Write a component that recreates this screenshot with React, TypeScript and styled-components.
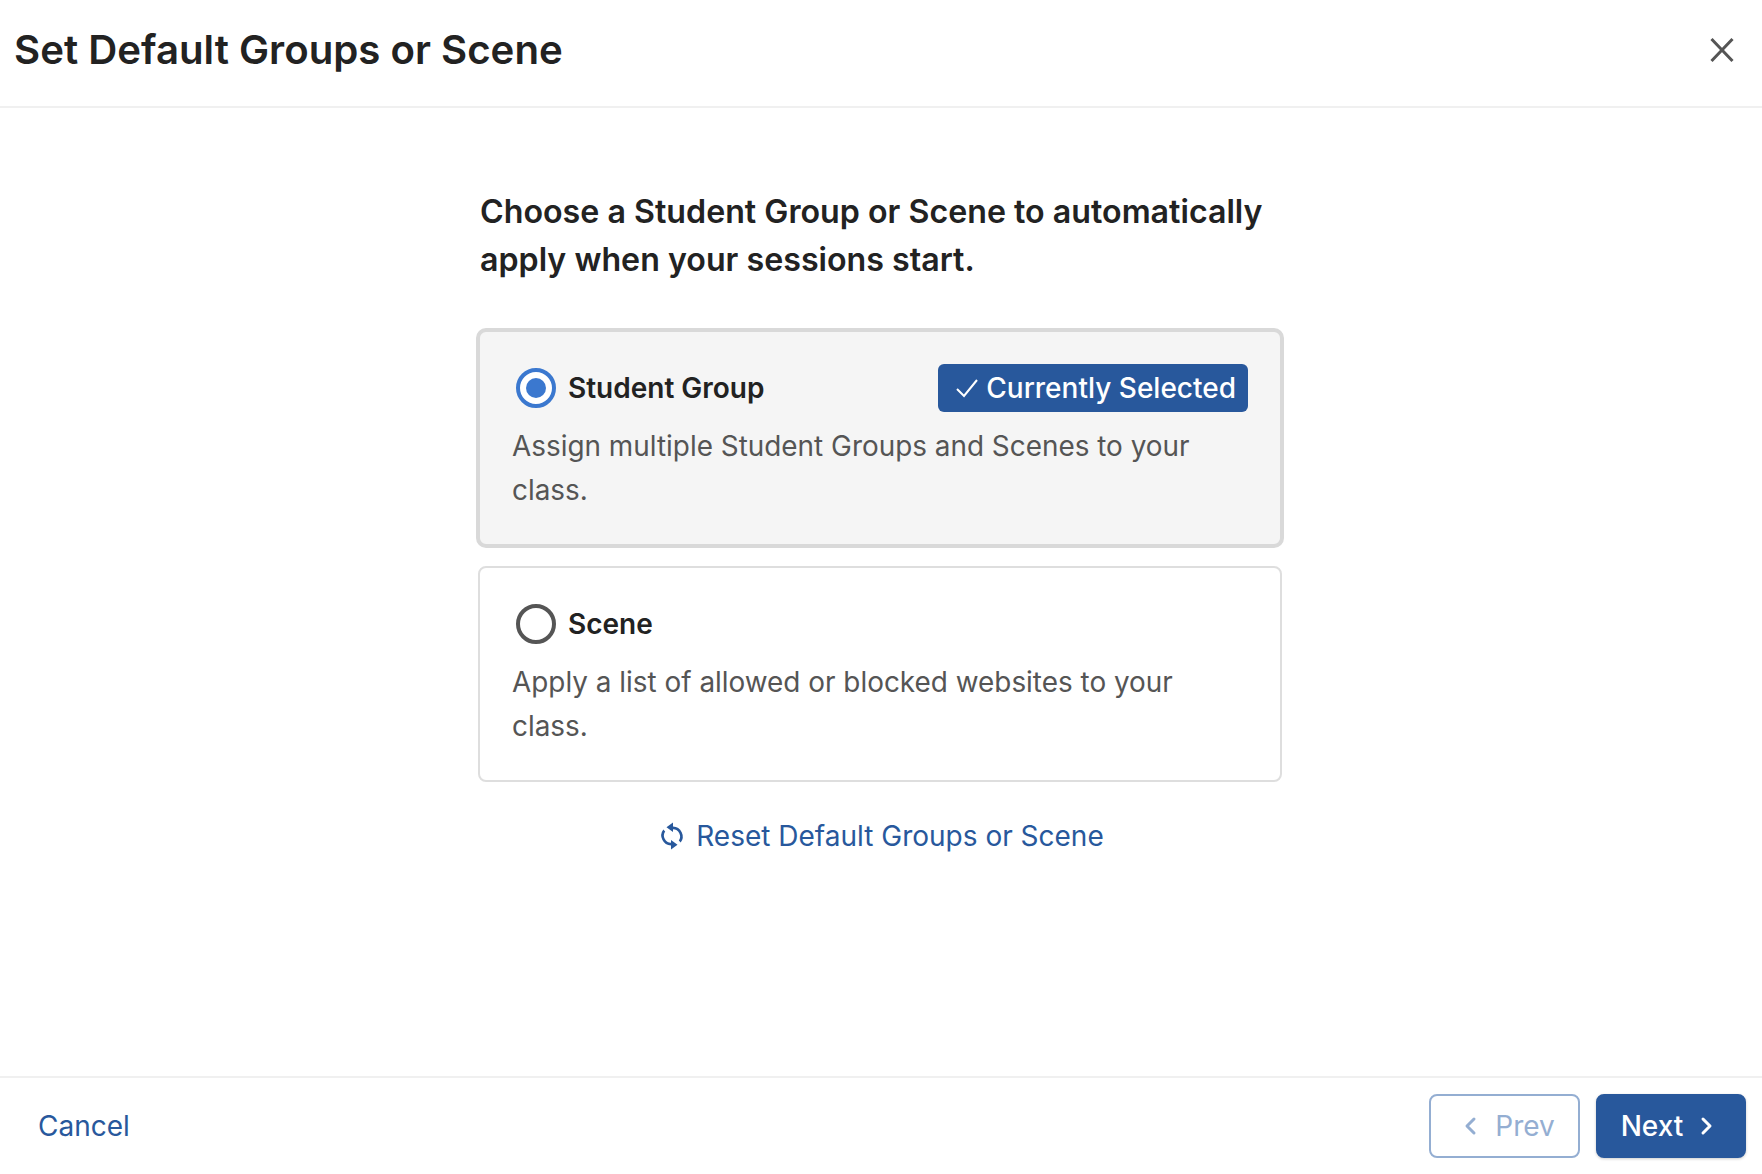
import React from "react";
import styled, { createGlobalStyle } from "styled-components";

const blue = "#28589c";

const GlobalStyle = createGlobalStyle`
  * {
    box-sizing: border-box;
  }

  body {
    margin: 0;
    background: #ffffff;
    font-family: Inter, "Liberation Sans", sans-serif;
  }
`;

const Modal = styled.div`
  display: flex;
  flex-direction: column;
  height: 100vh;
`;

const Header = styled.header`
  display: flex;
  align-items: center;
  justify-content: space-between;
  height: 108px;
  padding: 0 25px 7px 14px;
  border-bottom: 2px solid #f0f0f0;
`;

const Title = styled.h1`
  margin: 0;
  font-size: 40.2px;
  font-weight: 600;
  color: #222222;
`;

const IconButton = styled.button`
  display: flex;
  padding: 0;
  border: 0;
  background: none;
  color: #555555;
`;

const Body = styled.main`
  flex: 1;
  display: flex;
  flex-direction: column;
  width: 804px;
  margin-left: 478px;
  padding-top: 80px;
`;

const Heading = styled.h2`
  margin: 0 0 46px 2px;
  font-size: 32.2px;
  font-weight: 600;
  line-height: 48px;
  color: #222222;
`;

const OptionCard = styled.section<{ $selected?: boolean }>`
  margin-bottom: 20px;
  padding: 31px 32px 32px;
  border: 2px solid ${(p) => (p.$selected ? "#d9d9d9" : "#dedede")};
  border-radius: 8px;
  background: ${(p) => (p.$selected ? "#f5f5f5" : "#ffffff")};
  box-shadow: ${(p) => (p.$selected ? "0 0 0 2px #d9d9d9" : "none")};
`;

const OptionTop = styled.div`
  display: flex;
  align-items: center;
  min-height: 49px;
  padding-left: 4px;
`;

const Radio = styled.span<{ $checked?: boolean }>`
  display: flex;
  align-items: center;
  justify-content: center;
  width: 40px;
  height: 40px;
  margin-right: 12px;
  border: 4px solid ${(p) => (p.$checked ? "#3b78cf" : "#555555")};
  border-radius: 50%;
  background: #ffffff;

  &::after {
    content: "";
    display: ${(p) => (p.$checked ? "block" : "none")};
    width: 20px;
    height: 20px;
    border-radius: 50%;
    background: #3b78cf;
  }
`;

const OptionName = styled.span`
  font-size: 28px;
  font-weight: 600;
  color: #222222;
`;

const Badge = styled.span`
  display: flex;
  align-items: center;
  gap: 7px;
  height: 48px;
  margin-left: auto;
  padding: 0 12px 0 17px;
  border-radius: 6px;
  background: ${blue};
  font-size: 28px;
  font-weight: 500;
  color: #ffffff;
`;

const OptionText = styled.p`
  margin: 12px 0 0;
  font-size: 27.9px;
  line-height: 44px;
  color: #555555;
`;

const ResetLink = styled.button`
  display: flex;
  align-items: center;
  justify-content: center;
  gap: 10px;
  height: 44px;
  margin-top: 12px;
  padding: 0 0 0 2px;
  border: 0;
  background: none;
  font: inherit;
  font-size: 28px;
  color: ${blue};
`;

const Footer = styled.footer`
  display: flex;
  align-items: center;
  gap: 16px;
  padding: 16px 16px 16px 38px;
  border-top: 2px solid #f0f0f0;
`;

const CancelLink = styled.button`
  margin-right: auto;
  padding: 0;
  border: 0;
  background: none;
  font: inherit;
  font-size: 28px;
  color: ${blue};
`;

const StepButton = styled.button<{ $primary?: boolean }>`
  display: flex;
  align-items: center;
  justify-content: center;
  gap: ${(p) => (p.$primary ? "12px" : "13px")};
  width: ${(p) => (p.$primary ? "150px" : "151px")};
  height: 64px;
  padding: ${(p) => (p.$primary ? "0 2px 0 0" : "0 0 0 4px")};
  border: 2px solid ${(p) => (p.$primary ? blue : "#94aed2")};
  border-radius: 8px;
  background: ${(p) => (p.$primary ? blue : "#ffffff")};
  box-shadow: ${(p) => (p.$primary ? "0 1px 3px rgba(0, 0, 0, 0.2)" : "none")};
  font: inherit;
  font-size: 28px;
  font-weight: ${(p) => (p.$primary ? 500 : 400)};
  color: ${(p) => (p.$primary ? "#ffffff" : "#94aed2")};
`;

function CloseIcon() {
  return (
    <svg width="30" height="30" viewBox="0 0 30 30" fill="none" stroke="currentColor" strokeWidth="3">
      <path d="M4.500 4l21 22M25.500 4l-21 22" />
    </svg>
  );
}

function CheckIcon() {
  return (
    <svg width="24" height="24" viewBox="0 0 24 24" fill="none" stroke="currentColor" strokeWidth="2">
      <path d="M2 13l7 7L22 4" />
    </svg>
  );
}

function SyncIcon() {
  return (
    <svg width="28" height="32" viewBox="0 0 28 32" fill="currentColor">
      <path d="M15 2.500L8.500 7.200 15 12V9.200a7.300 7.300 0 0 1 5.800 11.400l1.900 1.900A10 10 0 0 0 15 6.500V2.500z" />
      <path d="M13 29.500l6.500-4.700L13 20v2.800A7.300 7.300 0 0 1 7.200 11.400L5.300 9.500A10 10 0 0 0 13 25.500v4z" />
    </svg>
  );
}

function Chevron({ left }: { left?: boolean }) {
  return (
    <svg width="24" height="24" viewBox="0 0 24 24" fill="none" stroke="currentColor" strokeWidth="3" strokeLinecap="round" strokeLinejoin="round">
      <path d={left ? "M16 5l-7 7 7 7" : "M8 5l7 7-7 7"} />
    </svg>
  );
}

export default function App() {
  return (
    <Modal>
      <GlobalStyle />
      <Header>
        <Title>Set Default Groups or Scene</Title>
        <IconButton aria-label="Close">
          <CloseIcon />
        </IconButton>
      </Header>
      <Body>
        <Heading>
          Choose a Student Group or Scene to automatically
          <br />
          apply when your sessions start.
        </Heading>
        <OptionCard $selected>
          <OptionTop>
            <Radio $checked />
            <OptionName>Student Group</OptionName>
            <Badge>
              <CheckIcon />
              Currently Selected
            </Badge>
          </OptionTop>
          <OptionText>Assign multiple Student Groups and Scenes to your class.</OptionText>
        </OptionCard>
        <OptionCard>
          <OptionTop>
            <Radio />
            <OptionName>Scene</OptionName>
          </OptionTop>
          <OptionText>Apply a list of allowed or blocked websites to your class.</OptionText>
        </OptionCard>
        <ResetLink>
          <SyncIcon />
          Reset Default Groups or Scene
        </ResetLink>
      </Body>
      <Footer>
        <CancelLink>Cancel</CancelLink>
        <StepButton>
          <Chevron left />
          Prev
        </StepButton>
        <StepButton $primary>
          Next
          <Chevron />
        </StepButton>
      </Footer>
    </Modal>
  );
}
